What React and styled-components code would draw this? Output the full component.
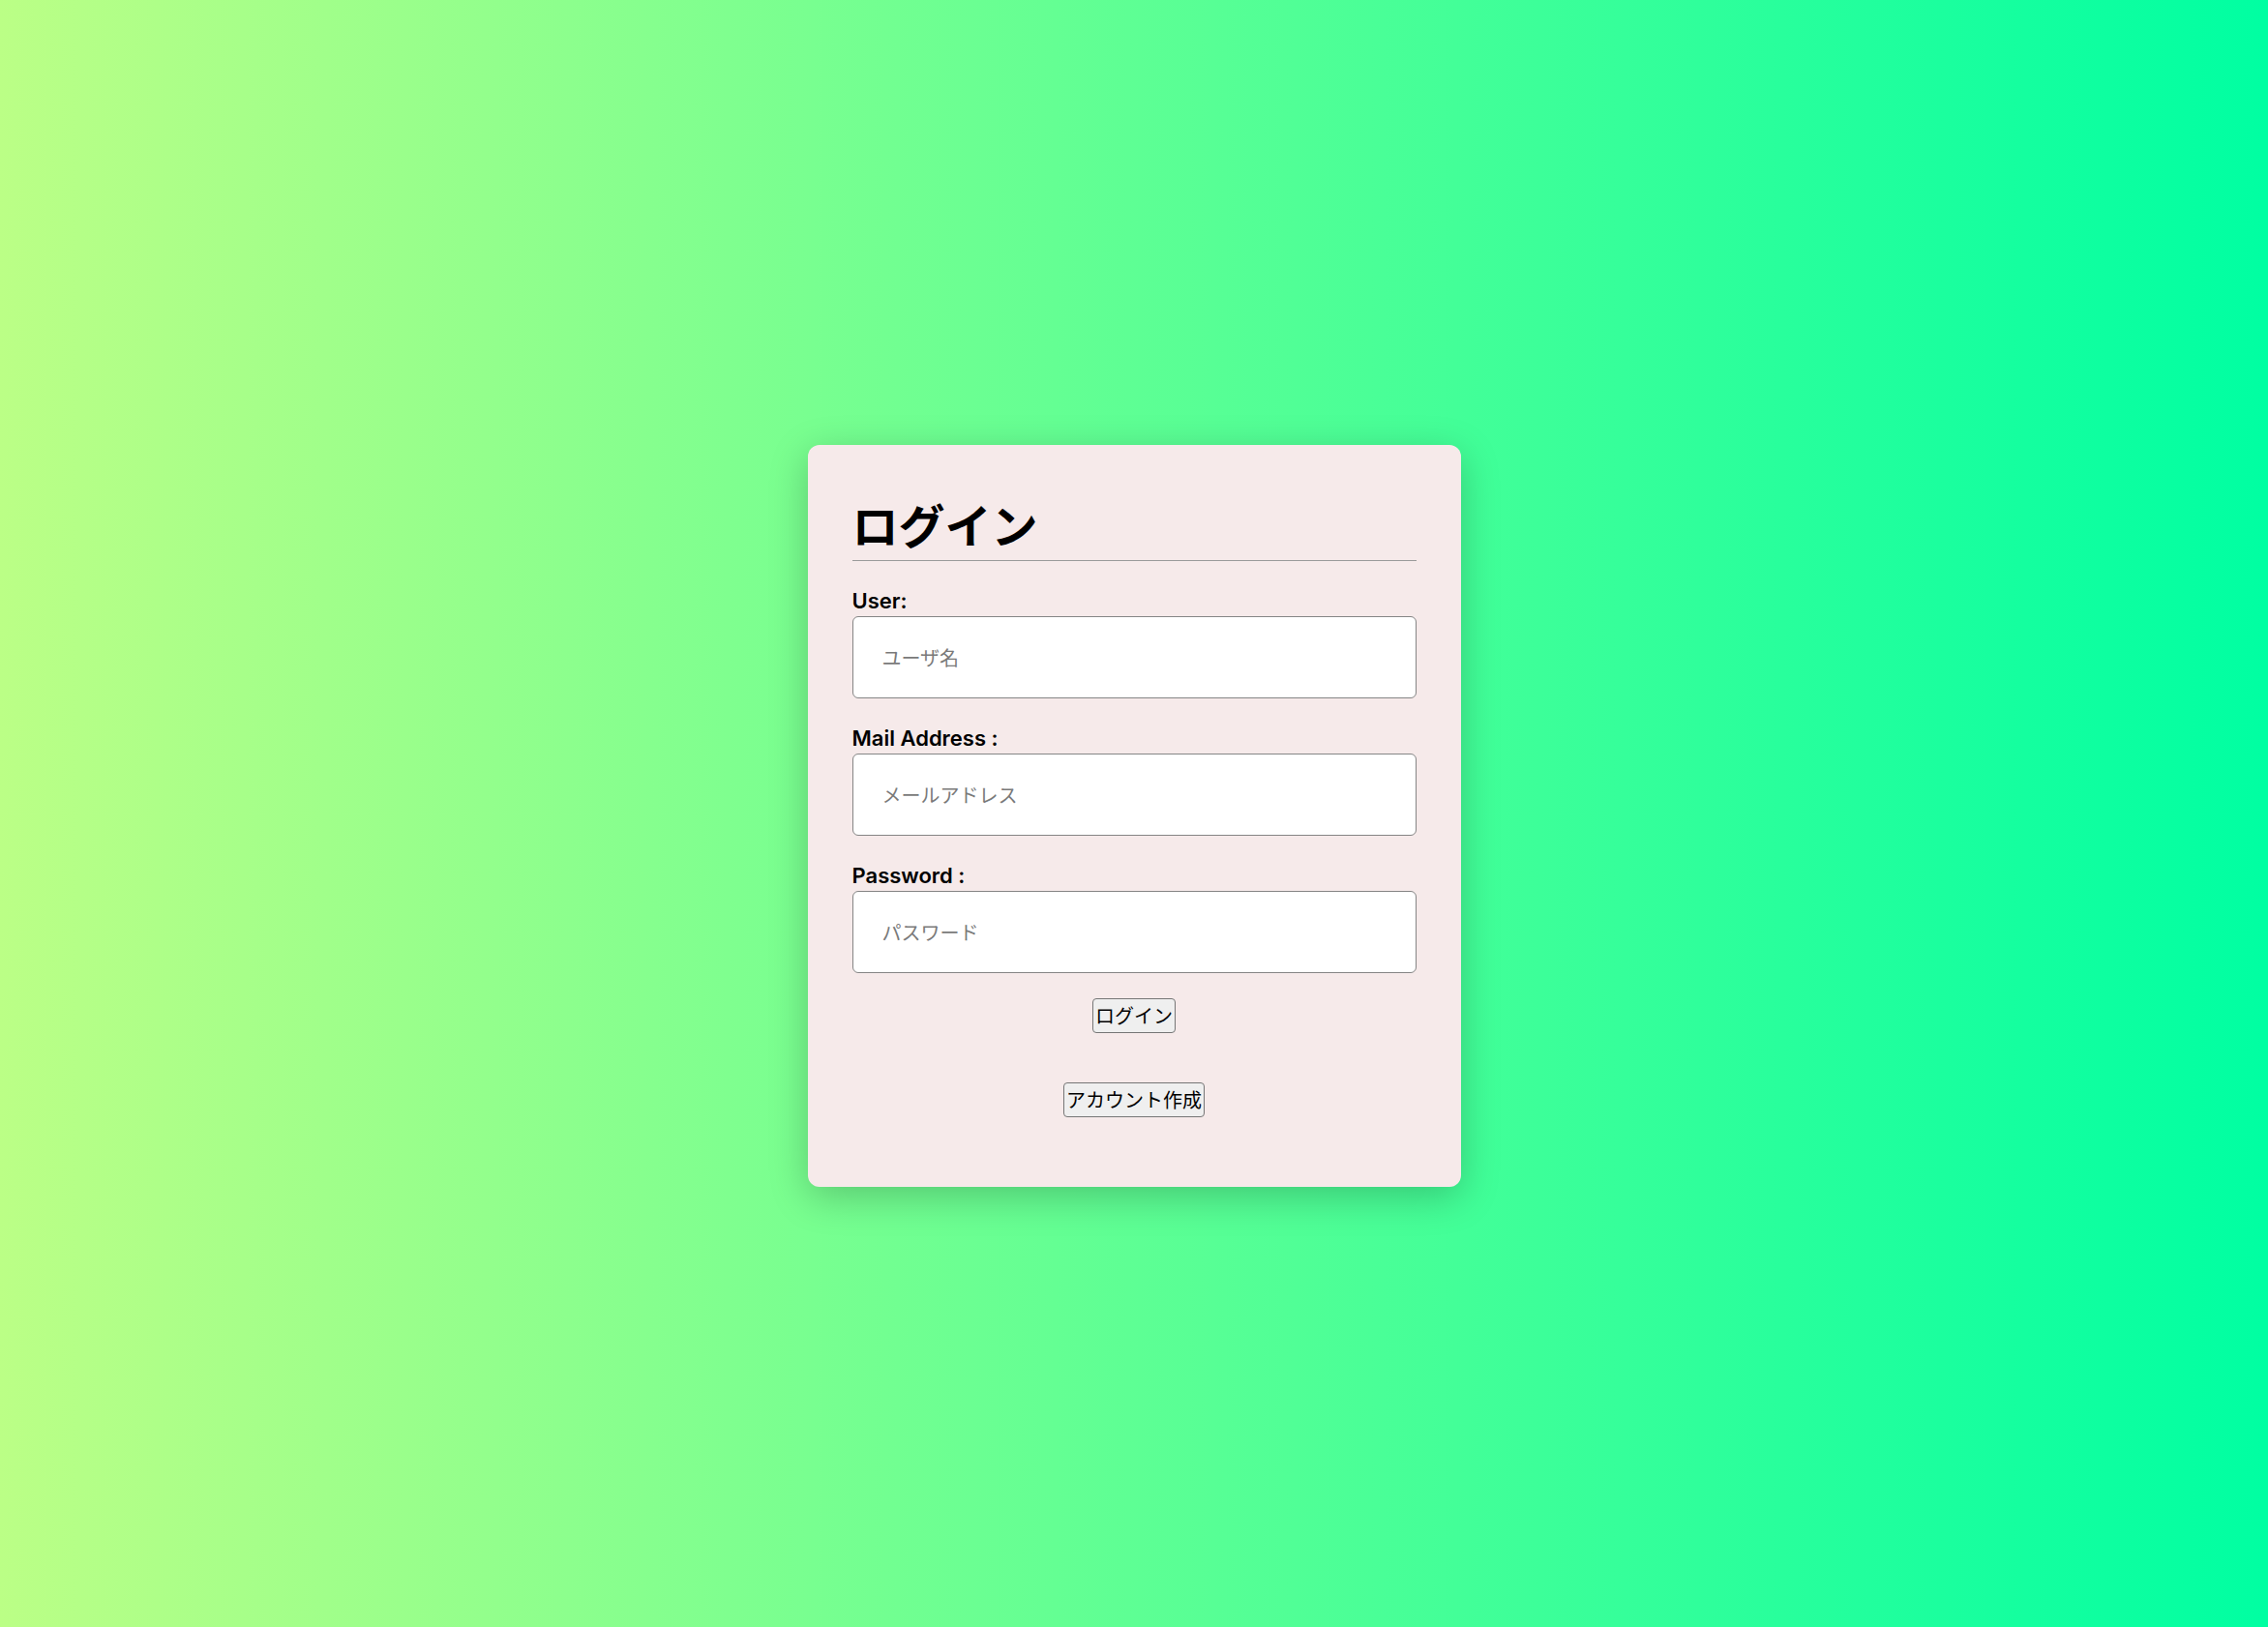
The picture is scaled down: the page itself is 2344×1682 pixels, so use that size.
import React from "react";
import styled, { createGlobalStyle } from "styled-components";

const GlobalStyle = createGlobalStyle`
  html, body {
    margin: 0;
    padding: 0;
  }
  body {
    font-family: Inter, "Noto Sans CJK JP", sans-serif;
  }
  * { box-sizing: border-box; }
`;

const Page = styled.main`
  min-height: 100vh;
  width: 100%;
  padding-top: 4px;
  display: flex;
  align-items: center;
  justify-content: center;
  background: linear-gradient(to right, #bbff86, #00ffa2);
`;

const Card = styled.section`
  width: 675px;
  padding: 45px 46px 72px;
  background: #f6eaea;
  border-radius: 12px;
  box-shadow: 0 10px 40px rgba(0, 0, 0, 0.22);
  display: flex;
  flex-direction: column;
`;

const Title = styled.h1`
  margin: 0;
  font-family: "Noto Sans CJK JP", sans-serif;
  font-size: 48px;
  font-weight: 700;
  line-height: 72px;
  color: #000;
  padding-bottom: 2px;
  border-bottom: 1.5px solid #9a9a9a;
`;

const Field = styled.div`
  display: flex;
  flex-direction: column;
  gap: 1px;
  margin-top: ${(p) => p.$top || 24}px;
`;

const Label = styled.label`
  font-family: Inter, "Noto Sans CJK JP", sans-serif;
  font-size: 22px;
  font-weight: 600;
  line-height: 30px;
  padding-top: 2px;
  color: #000;
`;

const Input = styled.input`
  width: 100%;
  height: 85px;
  padding: 0 30px;
  border: 1.5px solid #858585;
  border-radius: 6px;
  background: #fff;
  font-family: "Noto Sans CJK JP", sans-serif;
  font-size: 20px;
  color: #000;
  outline: none;
  &::placeholder {
    color: #7a7a7a;
  }
`;

const ButtonRow = styled.div`
  display: flex;
  justify-content: center;
  margin-top: ${(p) => p.$top}px;
`;

const Button = styled.button`
  height: 36px;
  padding: 0 2px;
  border: 1.5px solid #767676;
  border-radius: 4px;
  background: #efefef;
  font-family: "Noto Sans CJK JP", sans-serif;
  font-size: 20px;
  line-height: 1;
  color: #000;
  cursor: pointer;
`;

export default function App() {
  return (
    <>
      <GlobalStyle />
      <Page>
        <Card>
          <Title>ログイン</Title>
          <Field $top={24}>
            <Label htmlFor="user">User:</Label>
            <Input id="user" type="text" placeholder="ユーザ名" />
          </Field>
          <Field>
            <Label htmlFor="mail">Mail Address :</Label>
            <Input id="mail" type="email" placeholder="メールアドレス" />
          </Field>
          <Field>
            <Label htmlFor="password">Password :</Label>
            <Input id="password" type="password" placeholder="パスワード" />
          </Field>
          <ButtonRow $top={26}>
            <Button type="button">ログイン</Button>
          </ButtonRow>
          <ButtonRow $top={51}>
            <Button type="button">アカウント作成</Button>
          </ButtonRow>
        </Card>
      </Page>
    </>
  );
}
